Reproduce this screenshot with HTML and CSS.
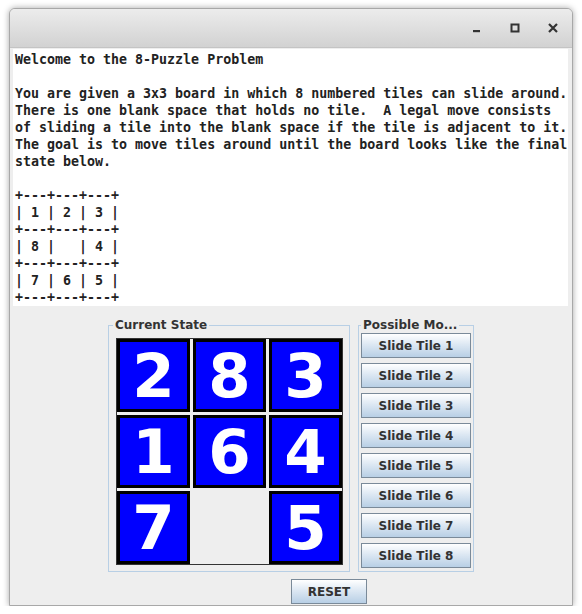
FILE: index.html
```
<!DOCTYPE html>
<html lang="en">

<head>
    <meta charset="UTF-8">
    <title>8-Puzzle</title>
    <link rel="stylesheet" href="styles.css">
</head>

<body>

    <div class="window">
        <div class="titlebar">
            <span class="win-btn">
                <svg width="10" height="10" viewBox="0 0 10 10"><rect x="1" y="7" width="7" height="2.2" fill="#333"/></svg>
            </span>
            <span class="win-btn">
                <svg width="10" height="10" viewBox="0 0 10 10"><rect x="1.5" y="1.5" width="7" height="7" fill="none" stroke="#333" stroke-width="2"/></svg>
            </span>
            <span class="win-btn">
                <svg width="10" height="10" viewBox="0 0 10 10"><path d="M1 1 L9 9 M9 1 L1 9" stroke="#333" stroke-width="2.2"/></svg>
            </span>
        </div>

        <div class="content">
<pre class="intro">Welcome to the 8-Puzzle Problem

You are given a 3x3 board in which 8 numbered tiles can slide around.
There is one blank space that holds no tile.  A legal move consists
of sliding a tile into the blank space if the tile is adjacent to it.
The goal is to move tiles around until the board looks like the final
state below.

+---+---+---+
| 1 | 2 | 3 |
+---+---+---+
| 8 |   | 4 |
+---+---+---+
| 7 | 6 | 5 |
+---+---+---+</pre>

            <div class="panels">
                <fieldset class="group state">
                    <legend>Current State</legend>
                    <div class="board">
                        <div class="tile">2</div>
                        <div class="tile">8</div>
                        <div class="tile">3</div>
                        <div class="tile">1</div>
                        <div class="tile">6</div>
                        <div class="tile">4</div>
                        <div class="tile">7</div>
                        <div class="tile empty"></div>
                        <div class="tile">5</div>
                    </div>
                </fieldset>

                <fieldset class="group moves">
                    <legend>Possible Mo...</legend>
                    <button class="btn">Slide Tile 1</button>
                    <button class="btn">Slide Tile 2</button>
                    <button class="btn">Slide Tile 3</button>
                    <button class="btn">Slide Tile 4</button>
                    <button class="btn">Slide Tile 5</button>
                    <button class="btn">Slide Tile 6</button>
                    <button class="btn">Slide Tile 7</button>
                    <button class="btn">Slide Tile 8</button>
                </fieldset>
            </div>

            <div class="reset-row">
                <button class="btn reset">RESET</button>
            </div>
        </div>
    </div>

</body>

</html>
```

FILE: styles.css
```
body {
    margin: 0;
    padding: 0;
    background: #ffffff;
    font-family: "DejaVu Sans", sans-serif;
}

.window {
    margin: 8px 0 0 9px;
    width: 562px;
    height: 596px;
    border: 1px solid #a8a8a8;
    border-radius: 6px 6px 0 0;
    background: #eeeeee;
    box-shadow: 0 0 6px rgba(0, 0, 0, 0.35);
    display: flex;
    flex-direction: column;
    overflow: hidden;
}

.titlebar {
    height: 38px;
    flex-shrink: 0;
    background: linear-gradient(#ececec, #d2d2d2);
    border-bottom: 1px solid #c4c4c4;
    display: flex;
    justify-content: flex-end;
    align-items: center;
    padding-right: 14px;
    gap: 28px;
}

.win-btn {
    width: 10px;
    height: 10px;
    display: block;
}

.win-btn svg {
    display: block;
}

.content {
    flex: 1;
    padding: 1px 4px 0 3px;
    display: flex;
    flex-direction: column;
}

.intro {
    margin: 0;
    height: 255px;
    padding: 2px 2px 0 2px;
    background: #ffffff;
    font-family: "DejaVu Sans Mono", monospace;
    font-weight: bold;
    font-size: 13.3px;
    line-height: 17px;
    color: #222222;
    overflow: hidden;
}

.panels {
    display: flex;
    gap: 8px;
    margin-top: 12px;
    padding-left: 95px;
}

.group {
    margin: 0;
    border: 1px solid #b8cfe5;
    min-width: 0;
}

.group legend {
    font-size: 12px;
    font-weight: bold;
    color: #333333;
    padding: 0 2px;
    line-height: 14px;
}

.state {
    padding: 6px 6px 6px 7px;
}

.state legend {
    margin-left: -3px;
}

.moves {
    width: 116px;
    box-sizing: border-box;
    padding: 1px 2px 0 2px;
    display: flex;
    flex-direction: column;
    gap: 5px;
}

.board {
    display: grid;
    grid-template-columns: repeat(3, 73px);
    grid-template-rows: repeat(3, 73px);
    gap: 3px;
    border: 1px solid #333333;
    background: #eeeeee;
}

.tile {
    background: #0000ff;
    border: 3px solid #000000;
    color: #ffffff;
    font-family: "DejaVu Sans", sans-serif;
    font-weight: bold;
    font-size: 61px;
    display: flex;
    align-items: center;
    justify-content: center;
}

.tile.empty {
    background: #eeeeee;
    border-color: #eeeeee;
}

.btn {
    height: 25px;
    width: 110px;
    margin: 0;
    padding: 0;
    border: 1px solid #7a8a99;
    background: linear-gradient(#ffffff, #dde8f3 45%, #b8cfe5);
    font-family: "DejaVu Sans", sans-serif;
    font-weight: bold;
    font-size: 12px;
    color: #333333;
}

.reset-row {
    display: flex;
    padding-left: 278px;
    margin-top: 7px;
}

.reset {
    width: 76px;
}
```
